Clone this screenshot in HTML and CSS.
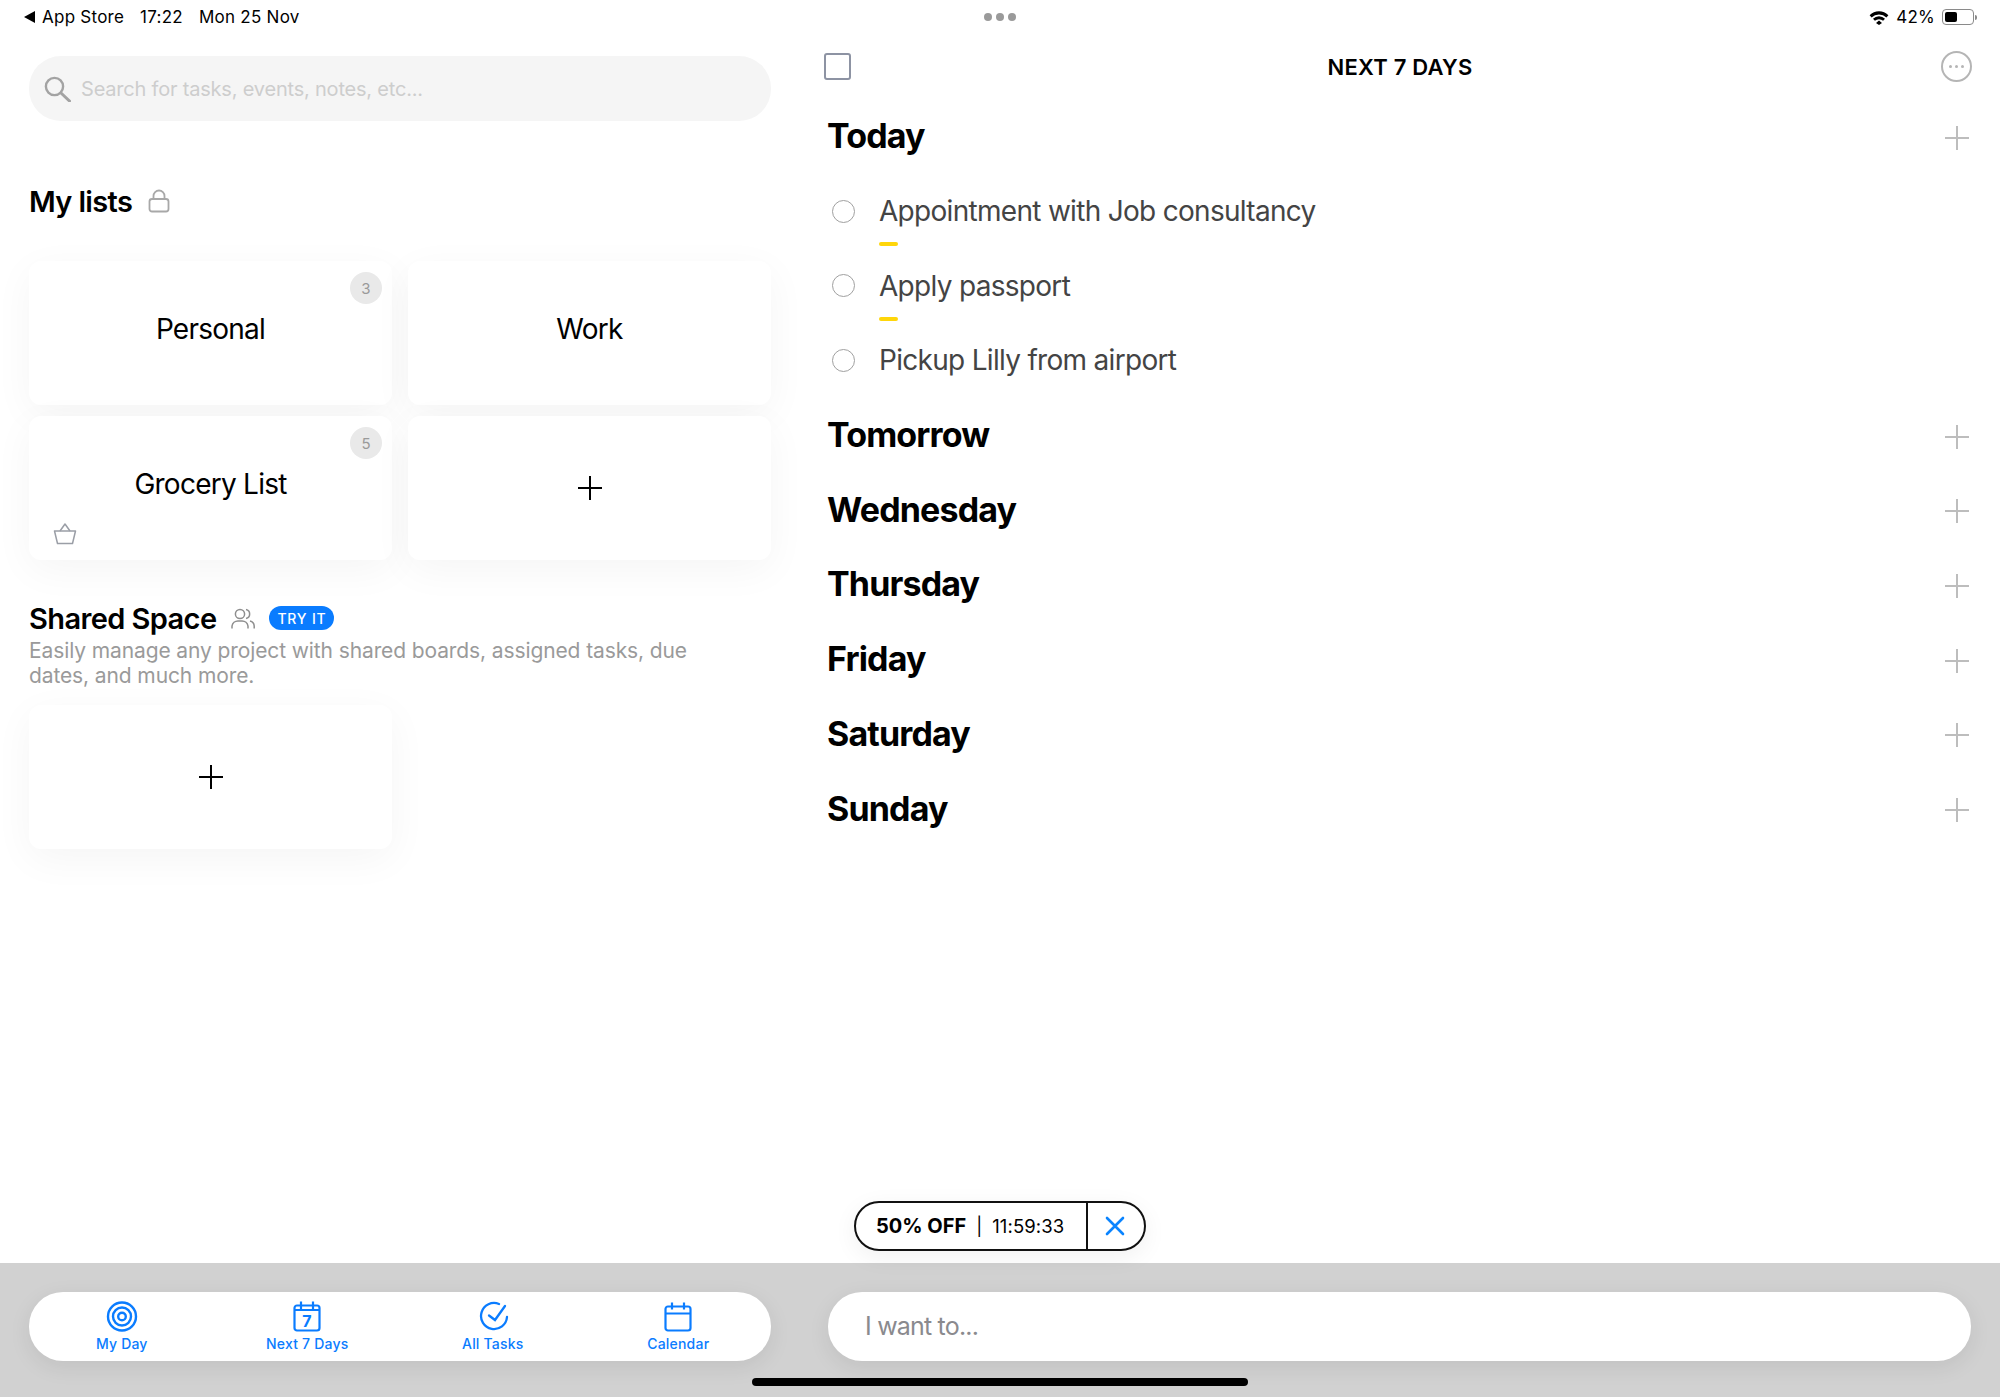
FILE: index.html
```html
<!DOCTYPE html>
<html lang="en">
<head>
<meta charset="utf-8">
<title>Next 7 Days</title>
<link rel="stylesheet" href="styles.css">
</head>
<body>
<div class="app">
  <div class="status">
    <div class="status-left">
      <span class="back-tri"></span><span class="st-store">App Store</span><span class="st-time">17:22</span><span class="st-date">Mon 25 Nov</span>
    </div>
    <div class="status-dots"><i></i><i></i><i></i></div>
    <div class="status-right">
      <svg class="wifi" width="20" height="15" viewBox="0 0 20 15"><path d="M10 10.6 13 12.9 10 15 7 12.9Z M0.6 5.2A13.4 13.4 0 0 1 19.4 5.2L17.4 7.4A10.6 10.6 0 0 0 2.6 7.4Z M4 8.7A8.4 8.4 0 0 1 16 8.7L14.1 10.8A6 6 0 0 0 5.9 10.8Z" fill="#000"/></svg>
      <span class="st-pct">42%</span>
      <span class="battery"><span class="battery-fill"></span></span><span class="battery-nub"></span>
    </div>
  </div>
  <div class="panes">
    <section class="left">
      <div class="search">
        <svg width="27" height="26" viewBox="0 0 27 26" fill="none" stroke="#a3a3a3" stroke-width="2.4"><circle cx="10.5" cy="10.5" r="8.6"/><path d="M17 17 25.5 25" stroke-linecap="round" stroke-width="3"/></svg>
        <span>Search for tasks, events, notes, etc...</span>
      </div>
      <h2 class="my-lists">My lists
        <svg width="22" height="24" viewBox="0 0 22 24" fill="none" stroke="#a8a8a8" stroke-width="1.8"><rect x="1.5" y="10" width="19" height="12.5" rx="2.5"/><path d="M5.5 10V7a5.5 5.5 0 0 1 11 0v3"/></svg>
      </h2>
      <div class="cards">
        <div class="card"><span class="card-label">Personal</span><span class="badge">3</span></div>
        <div class="card"><span class="card-label">Work</span></div>
        <div class="card"><span class="card-label">Grocery List</span><span class="badge">5</span>
          <svg class="basket" width="24" height="22" viewBox="0 0 24 22" fill="none" stroke="#9a9ea6" stroke-width="1.5" stroke-linejoin="round"><path d="M1.5 8H22.5L19.5 20.5H4.5Z"/><path d="M7 8 12 1 17 8"/></svg>
        </div>
        <div class="card card-add"><svg width="26" height="26" viewBox="0 0 26 26" stroke="#000" stroke-width="2"><path d="M13 1V25M1 13H25"/></svg></div>
      </div>
      <div class="shared-head">
        <h2>Shared Space</h2>
        <svg width="24" height="21" viewBox="0 0 24 21" fill="none" stroke="#8e8e8e" stroke-width="1.5"><circle cx="9" cy="6" r="4.6"/><path d="M1 20.5V18a6 6 0 0 1 6-5h4a6 6 0 0 1 6 5v2.5"/><path d="M15 1.5a4.6 4.6 0 0 1 0 9M19 13a5.5 5.5 0 0 1 4.2 5v2.5"/></svg>
        <span class="try">TRY IT</span>
      </div>
      <p class="shared-desc">Easily manage any project with shared boards, assigned tasks, due dates, and much more.</p>
      <div class="cards shared-cards">
        <div class="card card-add"><svg width="26" height="26" viewBox="0 0 26 26" stroke="#000" stroke-width="2"><path d="M13 1V25M1 13H25"/></svg></div>
      </div>
    </section>
    <section class="right">
      <header class="right-head">
        <span class="checkbox"></span>
        <h1>NEXT 7 DAYS</h1>
        <span class="more"><i></i><i></i><i></i></span>
      </header>
      <div class="days">
        <div class="day"><h3>Today</h3><svg class="add" width="24" height="24" viewBox="0 0 24 24" stroke="#bdbdbd" stroke-width="2"><path d="M12 0V24M0 12H24"/></svg></div>
        <div class="task"><span class="radio"></span><span class="task-text">Appointment with Job consultancy</span><span class="dash"></span></div>
        <div class="task"><span class="radio"></span><span class="task-text">Apply passport</span><span class="dash"></span></div>
        <div class="task"><span class="radio"></span><span class="task-text">Pickup Lilly from airport</span></div>
        <div class="day"><h3>Tomorrow</h3><svg class="add" width="24" height="24" viewBox="0 0 24 24" stroke="#bdbdbd" stroke-width="2"><path d="M12 0V24M0 12H24"/></svg></div>
        <div class="day"><h3>Wednesday</h3><svg class="add" width="24" height="24" viewBox="0 0 24 24" stroke="#bdbdbd" stroke-width="2"><path d="M12 0V24M0 12H24"/></svg></div>
        <div class="day"><h3>Thursday</h3><svg class="add" width="24" height="24" viewBox="0 0 24 24" stroke="#bdbdbd" stroke-width="2"><path d="M12 0V24M0 12H24"/></svg></div>
        <div class="day"><h3>Friday</h3><svg class="add" width="24" height="24" viewBox="0 0 24 24" stroke="#bdbdbd" stroke-width="2"><path d="M12 0V24M0 12H24"/></svg></div>
        <div class="day"><h3>Saturday</h3><svg class="add" width="24" height="24" viewBox="0 0 24 24" stroke="#bdbdbd" stroke-width="2"><path d="M12 0V24M0 12H24"/></svg></div>
        <div class="day"><h3>Sunday</h3><svg class="add" width="24" height="24" viewBox="0 0 24 24" stroke="#bdbdbd" stroke-width="2"><path d="M12 0V24M0 12H24"/></svg></div>
      </div>
      <div class="promo">
        <div class="promo-main"><b>50% OFF</b><span class="promo-sep">|</span><span class="promo-time">11:59:33</span></div>
        <div class="promo-close"><svg width="20" height="20" viewBox="0 0 20 20" stroke="#0a84ff" stroke-width="2.6" stroke-linecap="round"><path d="M2 2 18 18M18 2 2 18"/></svg></div>
      </div>
    </section>
  </div>
  <footer class="bottom">
    <nav class="tabs">
      <div class="tab">
        <svg width="32" height="31" viewBox="0 0 32 31" fill="none" stroke="#0a7cff" stroke-width="2.4"><circle cx="16" cy="15.5" r="14"/><circle cx="16" cy="15.5" r="9"/><circle cx="16" cy="15.5" r="3.8"/></svg>
        <span>My Day</span>
      </div>
      <div class="tab">
        <svg width="32" height="31" viewBox="0 0 32 31" fill="none" stroke="#0a7cff" stroke-width="2.2"><rect x="3.5" y="4.5" width="25" height="25" rx="2.5"/><path d="M3.5 9H28.5M10 0.5V8M22 0.5V8"/><text x="16" y="25.5" text-anchor="middle" class="seven">7</text></svg>
        <span>Next 7 Days</span>
      </div>
      <div class="tab">
        <svg width="32" height="31" viewBox="0 0 32 31" fill="none" stroke="#0a7cff" stroke-width="2.3" stroke-linecap="round"><path d="M22 3A13 13 0 1 0 30 16"/><path d="M12 14.5 18 19 28 5"/></svg>
        <span>All Tasks</span>
      </div>
      <div class="tab">
        <svg width="32" height="31" viewBox="0 0 32 31" fill="none" stroke="#0a7cff" stroke-width="2.2"><rect x="3.5" y="5.5" width="25" height="24" rx="2.5"/><path d="M3.5 12.5H28.5M10 1.5V8.5M22 1.5V8.5"/></svg>
        <span>Calendar</span>
      </div>
    </nav>
    <div class="want">I want to...</div>
    <div class="home"></div>
  </footer>
</div>
</body>
</html>
```
FILE: styles.css
```css
* { box-sizing: border-box; }
html, body { margin: 0; padding: 0; }
body { width: 2000px; height: 1397px; overflow: hidden; background: #fff; font-family: Inter, "Liberation Sans", sans-serif; color: #000; }
h1, h2, h3, p { margin: 0; }
.app { width: 2000px; height: 1397px; display: flex; flex-direction: column; position: relative; }

.status { height: 34px; display: grid; grid-template-columns: 1fr auto 1fr; align-items: center; padding: 0 24px; font-size: 17px; letter-spacing: 0.25px; }
.status-left { display: flex; align-items: center; }
.back-tri { width: 0; height: 0; border-style: solid; border-width: 6px 11px 6px 0; border-color: transparent #000 transparent transparent; margin-right: 7px; }
.st-store { margin-right: 16px; }
.st-time { margin-right: 16px; }
.status-dots { display: flex; gap: 4px; }
.status-dots i { width: 8px; height: 8px; border-radius: 50%; background: #9a9a9a; display: block; }
.status-right { display: flex; align-items: center; justify-content: flex-end; }
.wifi { margin-right: 7px; }
.st-pct { margin-right: 7px; }
.battery { width: 32px; height: 16px; border: 1.5px solid #8a8a8a; border-radius: 4px; padding: 2px; display: block; }
.battery-fill { display: block; width: 12px; height: 100%; background: #000; border-radius: 2px; }
.battery-nub { width: 2px; height: 5px; background: #8a8a8a; margin-left: 1px; margin-right: -1px; border-radius: 0 2px 2px 0; }

.panes { flex: 1; display: flex; min-height: 0; }
.left { width: 800px; padding: 22px 29px 0; }
.search { height: 65px; border-radius: 32px; background: #f5f5f5; display: flex; align-items: center; padding-left: 15px; gap: 10px; color: #cdcdcd; font-size: 20px; letter-spacing: -0.2px; }
.my-lists { margin-top: 60px; height: 40px; display: flex; align-items: center; gap: 16px; font-size: 29px; font-weight: 600; letter-spacing: -0.65px; }
.cards { margin-top: 40px; display: grid; grid-template-columns: 363px 363px; grid-auto-rows: 144px; gap: 11px 16px; }
.card { position: relative; border-radius: 12px; background: #fff; box-shadow: 0 10px 40px rgba(0,0,0,.045); display: flex; justify-content: center; padding-top: 50px; font-size: 28px; letter-spacing: -0.75px; }
.card-label { line-height: 36px; }
.card-add { align-items: center; padding-top: 0; }
.badge { position: absolute; top: 11px; right: 10px; width: 32px; height: 32px; border-radius: 50%; background: #e9e9e9; color: #9a9a9a; font-size: 15px; letter-spacing: 0; display: flex; align-items: center; justify-content: center; }
.basket { position: absolute; left: 24px; bottom: 15px; }
.shared-head { margin-top: 43px; height: 30px; display: flex; align-items: center; }
.shared-head h2 { font-size: 29px; font-weight: 600; letter-spacing: -0.6px; margin-right: 15px; }
.try { margin-left: 14px; width: 65px; height: 24px; border-radius: 12px; background: #0a7cff; color: #fff; font-size: 14px; font-weight: 500; letter-spacing: 0.8px; display: flex; align-items: center; justify-content: center; }
.shared-desc { margin-top: 4.5px; width: 680px; font-size: 21px; line-height: 25px; color: #9a9a9a; letter-spacing: -0.11px; }
.shared-cards { margin-top: 17.5px; }

.right { width: 1200px; padding: 17px 28px 0 24px; position: relative; }
.right-head { height: 30px; display: grid; grid-template-columns: 1fr auto 1fr; align-items: center; }
.right-head h1 { font-size: 22px; font-weight: 600; line-height: 28px; letter-spacing: 0.2px; transform: translateX(2px); }
.checkbox { width: 27px; height: 27px; border: 2px solid #8d93a3; border-radius: 3px; display: block; }
.more { justify-self: end; width: 31px; height: 31px; border: 2px solid #b5b5b5; border-radius: 50%; display: flex; align-items: center; justify-content: center; gap: 3px; }
.more i { width: 3px; height: 3px; border-radius: 50%; background: #b5b5b5; display: block; }
.days { margin-top: 18px; display: grid; grid-auto-rows: 74.7px; padding-left: 4px; }
.day { display: flex; align-items: center; justify-content: space-between; padding-right: 4px; }
.day h3 { font-size: 34px; font-weight: 700; letter-spacing: -0.85px; margin-left: -1px; margin-top: -1px; }
.add { margin-top: 3px; margin-right: -1px; }
.task { position: relative; display: flex; align-items: center; padding-left: 4px; font-size: 28px; color: #444; gap: 24px; letter-spacing: -0.7px; }
.radio { width: 23px; height: 23px; border: 1.5px solid #a0a0a0; border-radius: 50%; display: block; }
.dash { position: absolute; left: 51px; bottom: 2.5px; width: 19px; height: 4px; border-radius: 2px; background: #ffd60a; }
.promo { position: absolute; left: 54px; top: 1167px; width: 292px; height: 50px; border: 2px solid #111; border-radius: 25px; background: #fff; display: flex; box-shadow: 0 6px 24px rgba(0,0,0,.06); z-index: 2; }
.promo-main { width: 232px; border-right: 2px solid #111; display: flex; align-items: center; padding-left: 20px; font-size: 20px; }
.promo-main b { font-weight: 700; }
.promo-sep { margin: 0 10px; font-size: 18px; }
.promo-time { font-size: 18.5px; letter-spacing: 0.1px; }
.promo-close { flex: 1; display: flex; align-items: center; justify-content: center; padding-right: 3px; }

.bottom { height: 134px; flex: none; background: #d1d1d1; padding: 29px 29px 0; display: grid; grid-template-columns: 742px 1143px; column-gap: 57px; position: relative; align-items: start; }
.tabs { height: 69px; border-radius: 34px; background: #fff; box-shadow: 0 6px 22px rgba(0,0,0,.08); display: grid; grid-template-columns: repeat(4, 1fr); }
.tab { display: flex; flex-direction: column; align-items: center; padding-top: 9px; color: #0a7cff; font-size: 14px; font-weight: 500; letter-spacing: 0.2px; }
.tab span { margin-top: 3px; line-height: 17px; }
.seven { fill: #0a7cff; stroke: none; font-family: Inter, sans-serif; font-size: 16px; font-weight: 700; }
.want { height: 69px; border-radius: 34px; background: #fff; box-shadow: 0 6px 22px rgba(0,0,0,.08); display: flex; align-items: center; padding-left: 37px; padding-bottom: 1px; color: #8a8a8e; font-size: 25px; letter-spacing: -0.8px; }
.home { position: absolute; left: 752px; bottom: 11px; width: 496px; height: 8px; border-radius: 4px; background: #000; }
```
